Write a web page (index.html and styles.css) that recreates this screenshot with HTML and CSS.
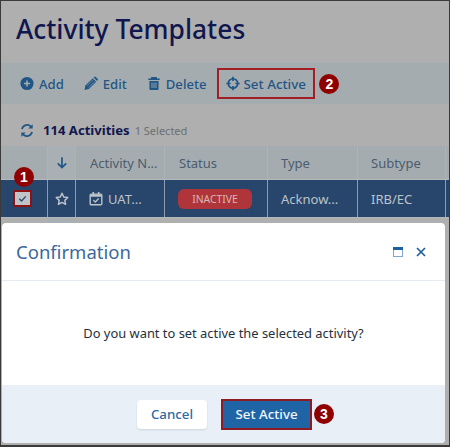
FILE: index.html
```html
<!DOCTYPE html>
<html lang="en">
<head>
<meta charset="utf-8">
<title>Activity Templates</title>
<link rel="stylesheet" href="styles.css">
</head>
<body>
<div class="frame">
  <div class="page">
    <h1 class="title">Activity Templates</h1>
    <div class="toolbar">
      <span class="tool">
        <svg class="ico" viewBox="0 0 16 16"><circle cx="8" cy="8" r="7.500" fill="currentColor"/><path d="M8 4.500v7M4.500 8h7" stroke="#a5acb0" stroke-width="1.800"/></svg>Add</span>
      <span class="tool">
        <svg class="ico" viewBox="0 0 16 16"><path d="M.6 15.400l1-5L10 2l4 4-8.400 8.400z" fill="currentColor"/><path d="M11 1l.6-.5a1.300 1.300 0 0 1 1.800 0l2.100 2.100a1.300 1.300 0 0 1 0 1.800l-.5.600z" fill="currentColor"/><path d="M3.500 10.500l7-7M5.500 12.500l7-7" stroke="#a5acb0" stroke-width=".7"/></svg>Edit</span>
      <span class="tool">
        <svg class="ico" viewBox="0 0 16 16"><path d="M1.500 3.200h13M5.500 3V1.400h5V3" fill="none" stroke="currentColor" stroke-width="1.600"/><path d="M2.800 5h10.400v9.200a1.200 1.200 0 0 1-1.200 1.200H4a1.200 1.200 0 0 1-1.200-1.200z" fill="currentColor"/><path d="M5.700 7v6.200M8 7v6.200M10.300 7v6.200" stroke="#a5acb0" stroke-width="1"/></svg>Delete</span>
      <span class="tool tool-marked">
        <svg class="ico" viewBox="0 0 16 16"><circle cx="8" cy="8" r="5.400" fill="none" stroke="currentColor" stroke-width="1.900"/><path d="M8 .4v4.800M8 10.800v4.800M.4 8h4.800M10.800 8h4.800" stroke="currentColor" stroke-width="1.900"/></svg>Set Active</span>
      <span class="marker marker-toolbar">2</span>
    </div>
    <div class="summary">
      <svg class="ico sync" viewBox="0 0 16 16"><path d="M2.300 6.500A6 6 0 0 1 12.500 3.500M13.700 9.500A6 6 0 0 1 3.500 12.500" fill="none" stroke="currentColor" stroke-width="2"/><path d="M14.500 .8v5h-5zM1.500 15.200v-5h5z" fill="currentColor"/></svg>
      <strong class="count">114 Activities</strong>
      <span class="selected">1 Selected</span>
    </div>
    <div class="grid grid-head">
      <div class="cell"></div>
      <div class="cell cell-sort"><svg class="ico-sm" viewBox="0 0 12 12"><path d="M6 .8v10M1.800 6.800L6 11l4.200-4.200" fill="none" stroke="currentColor" stroke-width="1.700"/></svg></div>
      <div class="cell cell-text cell-wide">Activity N...</div>
      <div class="cell cell-text cell-wide">Status</div>
      <div class="cell cell-text">Type</div>
      <div class="cell cell-text">Subtype</div>
    </div>
    <div class="grid grid-row">
      <div class="cell cell-check">
        <span class="check-box"><svg viewBox="0 0 12 12"><path d="M2.500 6.200l2.500 2.500 4.500-5" fill="none" stroke="#2b4a70" stroke-width="1.500"/></svg></span>
        <span class="marker marker-check">1</span>
      </div>
      <div class="cell cell-star"><svg class="ico-star" viewBox="0 0 14 14"><path d="M7 1.300l1.750 3.700 4 .55-2.900 2.800.7 4L7 10.450l-3.550 1.900.7-4-2.900-2.800 4-.55z" fill="none" stroke="currentColor" stroke-width="1.500" stroke-linejoin="round"/></svg></div>
      <div class="cell cell-text cell-name"><svg class="ico-cal" viewBox="0 0 14 14"><path d="M2.200 2.600h9.600a1 1 0 0 1 1 1v8.600a1 1 0 0 1-1 1H2.200a1 1 0 0 1-1-1V3.600a1 1 0 0 1 1-1z" fill="none" stroke="currentColor" stroke-width="1.400"/><path d="M1.500 3h11v2.300h-11zM3.500.6h1.600v3H3.500zM8.900.6h1.600v3H8.900z" fill="currentColor"/><path d="M4.300 8.600l2 1.900 3.400-3.500" fill="none" stroke="currentColor" stroke-width="1.300"/></svg>UAT...</div>
      <div class="cell cell-text"><span class="badge">INACTIVE</span></div>
      <div class="cell cell-text">Acknow...</div>
      <div class="cell cell-text">IRB/EC</div>
    </div>
    <div class="grid grid-next">
      <div class="cell"></div>
      <div class="cell cell-sort"></div>
    </div>
  </div>
  <div class="modal">
    <div class="modal-head">
      <span class="modal-title">Confirmation</span>
      <span class="modal-actions">
        <svg class="win" viewBox="0 0 10 10"><rect x=".5" y=".5" width="9" height="9" fill="#fff" stroke="#7ea6cf"/><rect x="0" y="0" width="10" height="3" fill="#1f5f9e"/></svg>
        <svg class="close" viewBox="0 0 10 10"><path d="M1 1l8 8M9 1l-8 8" stroke="#1f5f9e" stroke-width="1.700"/></svg>
      </span>
    </div>
    <div class="modal-body">Do you want to set active the selected activity?</div>
    <div class="modal-foot">
      <span class="btn btn-cancel">Cancel</span>
      <span class="btn btn-primary">Set Active</span>
      <span class="marker marker-foot">3</span>
    </div>
  </div>
</div>
</body>
</html>
```
FILE: styles.css
```css
* { box-sizing: border-box; }
html, body { margin: 0; padding: 0; }
body { width: 450px; height: 447px; overflow: hidden; font-family: "Noto Sans", sans-serif; background: #fff; }
.frame { position: relative; width: 450px; height: 447px; border: 1px solid #3a3a3a; border-bottom-width: 2px; overflow: hidden; background: #afafaf; }
.page { height: 100%; background: #afafaf; }
.title { margin: 0; padding: 10px 0 0 15px; height: 62px; font-size: 26.4px; line-height: 36px; font-weight: 500; color: #10174e; }
.toolbar { display: flex; align-items: center; height: 41px; padding-left: 19px; background: #a5acb0; color: #1f5686; font-size: 13.1px; font-weight: 500; }
.tool { display: flex; align-items: center; gap: 5px; margin-right: 20px; white-space: nowrap; }
.ico { width: 14px; height: 15px; flex: none; }
.tool-marked { width: 98px; height: 31px; padding-left: 7px; gap: 3px; margin-left: -9px; margin-right: 0; border: 2px solid #a31d24; font-size: 13.4px; }
.marker { display: flex; flex: none; align-items: center; justify-content: center; width: 20px; height: 20px; border-radius: 50%; background: #8f0000; color: #fff; font-size: 14px; font-weight: 700; font-family: "Liberation Sans", sans-serif; }
.marker-toolbar { margin-left: 4px; }
.summary { display: flex; align-items: center; height: 42px; padding: 10px 0 0 19px; }
.sync { color: #1f5686; }
.count { margin-left: 9px; font-size: 13.1px; font-weight: 700; color: #10174e; }
.selected { margin-left: 5px; font-size: 11px; color: #6a6f74; }
.grid { display: grid; grid-template-columns: 47px 28px 89px 103px 90px 88px 1fr; }
.grid-head { height: 33px; background: #a5acb0; color: #4b5c6e; font-size: 13px; }
.grid-head .cell { border-right: 1px solid #adb4b8; }
.grid-row { height: 39px; background: #28466c; color: #bcc3ca; font-size: 13px; border-top: 1px solid #b4b8bb; border-bottom: 1px solid #b4b8bb; }
.grid-row .cell { border-right: 1px solid #8d9cb0; }
.grid-next { height: 6px; }
.cell { display: flex; align-items: center; min-width: 0; white-space: nowrap; }
.cell-text { padding-left: 13px; }
.cell-wide { padding-left: 14px; }
.cell-sort { justify-content: center; background: #a9b0b4; color: #1f5686; }
.ico-sm { width: 12px; height: 13px; }
.cell-check { position: relative; justify-content: center; padding-right: 3px; }
.check-box { display: flex; width: 19px; height: 17px; padding: 1px 2px; background: #c0c4c8; border: 2px solid #8f1111; }
.check-box svg { width: 100%; height: 100%; }
.marker-check { position: absolute; left: 13px; top: -13px; }
.cell-star { justify-content: center; color: #bcc3ca; }
.ico-star { width: 14px; height: 14px; }
.cell-name { gap: 5px; padding-left: 13px; }
.ico-cal { width: 14px; height: 15px; flex: none; color: #bcc3ca; }
.badge { display: block; width: 74px; height: 20px; border-radius: 6px; background: #b0353a; color: #d9b6b6; font-size: 10.4px; line-height: 20px; text-align: center; }
.modal { position: absolute; left: 1px; top: 222px; width: 443px; height: 220px; display: flex; flex-direction: column; background: #fff; border-radius: 4px; overflow: hidden; }
.modal-head { display: flex; flex: none; align-items: center; justify-content: space-between; height: 58px; padding: 0 19px 0 14px; border-bottom: 1px solid #e6ebf1; }
.modal-title { font-size: 18.5px; color: #3a689c; }
.modal-actions { display: flex; align-items: center; gap: 13px; }
.win { width: 10px; height: 10px; }
.close { width: 10px; height: 10px; }
.modal-body { flex: 1; display: flex; align-items: center; justify-content: center; font-size: 12.9px; color: #25313d; }
.modal-foot { display: flex; flex: none; align-items: center; height: 58px; padding-left: 135px; background: #e9eff7; }
.btn { display: flex; align-items: center; justify-content: center; height: 29px; border-radius: 4px; font-size: 13.3px; font-weight: 500; }
.btn-cancel { width: 70px; margin-right: 14px; background: #fff; color: #2f6aa5; box-shadow: 0 1px 2px rgba(0,0,0,.12); }
.btn-primary { width: 91px; height: 31px; background: #1f65a6; color: #f2f6fa; border: 2px solid #8f1a22; border-radius: 0; }
.marker-foot { margin-left: 2px; }
```
